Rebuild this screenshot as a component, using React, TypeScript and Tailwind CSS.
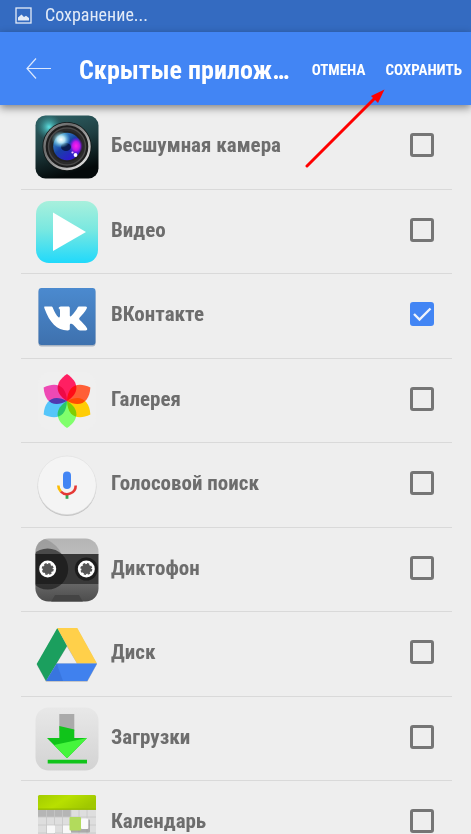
import { useState } from "react";
import type { ReactNode } from "react";

interface AppItem {
  id: string;
  name: string;
  icon: ReactNode;
}

const iconClass = "block h-16 w-16";

const CameraIcon = () => (
  <svg viewBox="0 0 64 64" className={iconClass} aria-hidden="true">
    <defs>
      <linearGradient id="camBody" x1="0" y1="0" x2="0.3" y2="1">
        <stop offset="0" stopColor="#2f6468" />
        <stop offset="0.5" stopColor="#203f42" />
        <stop offset="1" stopColor="#04090a" />
      </linearGradient>
      <radialGradient id="camGlow">
        <stop offset="0" stopColor="#5fe3e3" />
        <stop offset="1" stopColor="#2f8a8c" stopOpacity="0" />
      </radialGradient>
      <linearGradient id="camRing" x1="0" y1="0" x2="1" y2="1">
        <stop offset="0" stopColor="#8d9191" />
        <stop offset="0.3" stopColor="#6b6b6b" />
        <stop offset="0.6" stopColor="#a0a0a0" />
        <stop offset="1" stopColor="#f2f2f2" />
      </linearGradient>
      <linearGradient id="camGlass" x1="0" y1="0" x2="0.8" y2="1">
        <stop offset="0" stopColor="#4fb5d4" />
        <stop offset="0.5" stopColor="#1742a5" />
        <stop offset="1" stopColor="#3510d8" />
      </linearGradient>
      <radialGradient id="camShine">
        <stop offset="0" stopColor="#ffffff" />
        <stop offset="0.4" stopColor="#c5f0f8" stopOpacity="0.9" />
        <stop offset="1" stopColor="#4fc0e0" stopOpacity="0" />
      </radialGradient>
      <radialGradient id="camPink">
        <stop offset="0" stopColor="#ff20f0" />
        <stop offset="0.5" stopColor="#c018e8" />
        <stop offset="1" stopColor="#6018e0" stopOpacity="0" />
      </radialGradient>
    </defs>
    <rect x="0.5" y="0.5" width="63" height="63" rx="10" fill="url(#camBody)" />
    <circle cx="14" cy="12" r="13" fill="url(#camGlow)" />
    <circle cx="32" cy="31.5" r="24.5" fill="#101414" />
    <circle cx="32" cy="31.5" r="22.5" fill="#1c1c1c" stroke="url(#camRing)" strokeWidth="2.4" />
    <circle cx="32" cy="31.5" r="18.5" fill="#2b2b2b" stroke="#4a4a4a" strokeWidth="1.4" />
    <circle cx="32" cy="31.5" r="15.5" fill="#222" />
    <circle cx="32" cy="31.5" r="13.8" fill="url(#camGlass)" />
    <ellipse cx="41" cy="31" rx="7" ry="9" fill="url(#camPink)" />
    <ellipse cx="31" cy="32" rx="5" ry="4" fill="#061238" opacity="0.8" />
    <ellipse cx="26" cy="24.5" rx="9.5" ry="8.5" fill="url(#camShine)" />
    <circle cx="40.5" cy="40" r="1.9" fill="#fff" />
    <circle cx="37.5" cy="37.5" r="1.1" fill="#f3c0ff" />
  </svg>
);

const VideoIcon = () => (
  <svg viewBox="0 0 64 64" className={iconClass} aria-hidden="true">
    <defs>
      <linearGradient id="videoBg" x1="0" y1="0" x2="0" y2="1">
        <stop offset="0" stopColor="#a8f0dc" />
        <stop offset="0.45" stopColor="#7be8e0" />
        <stop offset="1" stopColor="#20d9fb" />
      </linearGradient>
    </defs>
    <rect x="1" y="1" width="62" height="62" rx="13" fill="url(#videoBg)" />
    <path d="M18 12.5V51L51 32Z" fill="#fff" />
  </svg>
);

const VkIcon = () => (
  <svg viewBox="0 0 64 64" className={iconClass} aria-hidden="true">
    <defs>
      <linearGradient id="vkBg" x1="0" y1="0" x2="0" y2="1">
        <stop offset="0" stopColor="#4b8acf" />
        <stop offset="1" stopColor="#3e71ae" />
      </linearGradient>
    </defs>
    <rect x="3.5" y="5.5" width="57" height="57" rx="3" fill="#a9b4c2" />
    <rect x="3.5" y="4" width="57" height="57" rx="3" fill="url(#vkBg)" />
    <path
      d="M10 22.6H16C17 22.6 17.5 23 18 24.2C19.5 28 21.5 31.5 23.5 33.2C24.5 34 25 33 25 31V27C25 25 24.3 24.5 23.5 24.2C24 23 25.5 22.6 27 22.6H33C34.3 22.6 34.8 23.2 34.8 24.5V31.5C34.8 32.5 35.5 32.8 36.5 31.8C39 29.2 41.5 26 42.5 23.8C43 22.8 43.5 22.6 44.5 22.6H50.5C52 22.6 52.3 23.4 51.6 24.8C49.8 28 47 31.2 44.8 33.6C44 34.5 44 35 44.8 36C47 38.3 50.5 41.5 52 44.2C52.7 45.5 52 46.4 50.6 46.4H45C43.7 46.4 43.2 46 42.3 45C40.5 43 38.5 40.6 36.5 39.8C35.3 39.4 34.8 40 34.8 41.2V44.5C34.8 46 34.2 46.4 32.5 46.4C22 46.4 14.5 38.5 9.6 24.8C9 23.2 9 22.6 10 22.6Z"
      fill="#fff"
    />
  </svg>
);

const petals = [
  { angle: 0, color: "#ff1f62" },
  { angle: 60, color: "#ff5f37" },
  { angle: 120, color: "#ffcd05" },
  { angle: 180, color: "#80ff6c" },
  { angle: 240, color: "#55c6fa" },
  { angle: 300, color: "#ee49b4" },
];

const GalleryIcon = () => (
  <svg viewBox="0 0 64 64" className={iconClass} aria-hidden="true">
    <rect x="3" y="3" width="58" height="58" rx="12" fill="#efefef" />
    <g className="isolate">
      {petals.map((petal) => (
        <path
          key={petal.angle}
          d="M32 32C19 24 20 13 32 5C44 13 45 24 32 32Z"
          fill={petal.color}
          transform={`rotate(${petal.angle} 32 32)`}
          className="mix-blend-multiply"
        />
      ))}
    </g>
  </svg>
);

const VoiceIcon = () => (
  <svg viewBox="0 0 64 64" className={iconClass} aria-hidden="true">
    <circle cx="32" cy="33.6" r="29.4" fill="#c4c4c4" />
    <circle cx="32" cy="32.3" r="29.3" fill="#f4f4f4" stroke="#dedede" strokeWidth="0.6" />
    <rect x="28" y="18.6" width="8" height="17.4" rx="4" fill="#4285f4" />
    <path d="M30.6 41H33.4V45.8H30.6Z" fill="#34a853" />
    <path d="M23.3 32.4A8.7 8.7 0 0 0 25.9 38.6" fill="none" stroke="#fbbc05" strokeWidth="2.6" />
    <path d="M25.9 38.6A8.7 8.7 0 0 0 40.7 32.4" fill="none" stroke="#e53935" strokeWidth="2.6" />
  </svg>
);

const RecorderIcon = () => (
  <svg viewBox="0 0 64 64" className={iconClass} aria-hidden="true">
    <defs>
      <clipPath id="recClip">
        <rect x="0.5" y="0.5" width="63" height="63" rx="13" />
      </clipPath>
      <linearGradient id="recTop" x1="0" y1="0" x2="0" y2="1">
        <stop offset="0" stopColor="#b4b4b4" />
        <stop offset="1" stopColor="#bdbdbd" />
      </linearGradient>
      <linearGradient id="recBottom" x1="0" y1="0" x2="0" y2="1">
        <stop offset="0" stopColor="#666" />
        <stop offset="1" stopColor="#4c4c4c" />
      </linearGradient>
    </defs>
    <g clipPath="url(#recClip)">
      <rect width="64" height="17" fill="url(#recTop)" />
      <circle cx="2" cy="27" r="27" fill="#8b8b8b" opacity="0.55" />
      <rect y="46" width="64" height="18" fill="url(#recBottom)" />
      <rect y="16" width="64" height="30" fill="#383838" />
      <circle cx="12.7" cy="31" r="20.5" fill="#111" opacity="0.6" />
      <circle cx="51.3" cy="31" r="11.5" fill="#1d1d1d" />
      <path d="M16 64L20 57H44L48 64Z" fill="#444" />
    </g>
    {[12.7, 51.3].map((cx) => (
      <g key={cx}>
        <circle cx={cx} cy="31" r="8.5" fill="#fff" />
        <circle cx={cx} cy="31" r="5" fill="#555" />
        <circle cx={cx} cy="31" r="5.2" fill="none" stroke="#555" strokeWidth="1.6" strokeDasharray="2.4 1.68" />
      </g>
    ))}
  </svg>
);

const DriveIcon = () => (
  <svg viewBox="0 0 64 64" className={iconClass} aria-hidden="true">
    <path d="M22.3 6.8L42.3 6.8L62 42.3L52.3 59.8H11L1.7 42.8Z M32 24.8L21.7 41.5H42Z" fill="#bbb" fillRule="evenodd" />
    <path d="M22.3 6L32 24L11 59L1.7 42Z" fill="#1b9f5e" />
    <path d="M22.3 6H42.3L62 41.5H42Z" fill="#ffd04a" />
    <path d="M21.7 41.5H62L52.3 59H11Z" fill="#4081ee" />
    <path d="M21.7 41.5L28 59H11Z" fill="#2c65c8" opacity="0.4" />
  </svg>
);

const DownloadsIcon = () => (
  <svg viewBox="0 0 64 64" className={iconClass} aria-hidden="true">
    <defs>
      <linearGradient id="dlBg" x1="0" y1="0" x2="0" y2="1">
        <stop offset="0" stopColor="#e8e8e8" />
        <stop offset="1" stopColor="#d3d3d3" />
      </linearGradient>
    </defs>
    <rect x="0.5" y="0.5" width="63" height="63" rx="13" fill="url(#dlBg)" />
    <path d="M24.3 7H39.3V24H24.3Z" fill="#aaa" />
    <path d="M24.3 19L39.3 22.5V31H52L32 51.3L12 31H24.3Z" fill="#10c41a" />
    <path d="M19 38L52 31L32 51.3Z" fill="#45f53c" />
    <path d="M12.7 52.7H52V56.5H12.7Z" fill="#10c41a" />
  </svg>
);

const CalendarIcon = () => (
  <svg viewBox="0 0 64 64" className={iconClass} aria-hidden="true">
    <defs>
      <linearGradient id="calTop" x1="0" y1="0" x2="1" y2="0.4">
        <stop offset="0" stopColor="#a3cc00" />
        <stop offset="0.5" stopColor="#b8e000" />
        <stop offset="1" stopColor="#a0c800" />
      </linearGradient>
    </defs>
    <rect x="3" y="4" width="58" height="58" rx="1.5" fill="#dedede" />
    <rect x="3" y="18" width="33" height="8" fill="#b5b5b5" />
    <path d="M3 26H61M3 34H61M3 42H61M3 50H61M11.5 18V62M19.5 18V62M27.5 18V62M36 18V62M44 18V62M52 18V62" stroke="#c6c6c6" strokeWidth="0.8" />
    <path d="M12 34.5H20V42H12ZM28 34.5H36V42H28Z" fill="#f8f8f8" />
    <path d="M4.5 4H59.5Q61 4 61 5.5V18.8H3V5.5Q3 4 4.5 4Z" fill="url(#calTop)" />
    <path d="M3 17.6H61V18.8H3Z" fill="#93b900" />
    <rect x="36" y="28.5" width="19" height="13" rx="1" fill="#888" opacity="0.6" />
    <rect x="46" y="27.5" width="7.3" height="10.5" rx="1" fill="#fafafa" />
    <rect x="34.5" y="26" width="11.5" height="13.5" rx="1" fill="#b2db5c" />
  </svg>
);

const apps: AppItem[] = [
  { id: "camera", name: "Бесшумная камера", icon: <CameraIcon /> },
  { id: "video", name: "Видео", icon: <VideoIcon /> },
  { id: "vk", name: "ВКонтакте", icon: <VkIcon /> },
  { id: "gallery", name: "Галерея", icon: <GalleryIcon /> },
  { id: "voice", name: "Голосовой поиск", icon: <VoiceIcon /> },
  { id: "recorder", name: "Диктофон", icon: <RecorderIcon /> },
  { id: "drive", name: "Диск", icon: <DriveIcon /> },
  { id: "downloads", name: "Загрузки", icon: <DownloadsIcon /> },
  { id: "calendar", name: "Календарь", icon: <CalendarIcon /> },
];

export default function App() {
  const [hidden, setHidden] = useState<string[]>(["vk"]);

  const toggle = (id: string) => {
    setHidden((prev) =>
      prev.includes(id) ? prev.filter((item) => item !== id) : [...prev, id]
    );
  };

  return (
    <div className="relative flex h-screen flex-col overflow-hidden bg-[#eeeeee] font-['Roboto_Condensed',Roboto,sans-serif]">
      {/* Status bar */}
      <div className="flex h-8 shrink-0 items-center gap-[13px] bg-[#346bc1] pb-0.5 pl-[15px] text-[#e3ebf7]">
        <svg viewBox="0 0 17 17" className="h-[17px] w-[17px]" aria-hidden="true">
          <rect x="1" y="1" width="15" height="15" fill="none" stroke="currentColor" strokeWidth="1.3" />
          <path d="M3 13.5V10.5L6.5 7.5L9 10L11 8.8L14 11V13.5Z" fill="currentColor" />
        </svg>
        <span className="text-[18px] leading-6">Сохранение...</span>
      </div>

      {/* Header */}
      <header className="z-10 flex h-[73px] shrink-0 items-center bg-[#4285f4] pr-[9px] pl-[26px] text-white shadow-[0_3px_8px_rgba(0,0,0,0.45)]">
        <button type="button" aria-label="Назад" className="shrink-0">
          <svg viewBox="0 0 26 22" className="h-[22px] w-[26px]" fill="none" stroke="#dce8fd" strokeWidth="1.2">
            <path d="M25 10.5H1M10 0.5L1 10.5L10 20.5" />
          </svg>
        </button>
        <h1 className="ml-[27px] flex-1 pt-0.5 text-[26px] leading-8 font-bold whitespace-nowrap">
          Скрытые прилож…
        </h1>
        <div className="ml-4 flex shrink-0 gap-5 pt-0.5 text-[15px] leading-5 font-bold">
          <button type="button">ОТМЕНА</button>
          <button type="button">СОХРАНИТЬ</button>
        </div>
      </header>

      {/* App list */}
      <ul className="min-h-0 flex-1 overflow-hidden pr-[19px] pl-[21px]">
        {apps.map((app) => (
          <li
            key={app.id}
            className="flex items-center border-b border-[#d9d9d9] pr-[18px] pl-[14px] odd:h-[85px] even:h-[84px]"
          >
            {app.icon}
            <label
              htmlFor={app.id}
              className="ml-3 flex-1 pb-1 text-[21px] leading-7 font-bold text-[#6d6d6d]"
            >
              {app.name}
            </label>
            <span className="grid pb-1">
              <input
                id={app.id}
                type="checkbox"
                checked={hidden.includes(app.id)}
                onChange={() => toggle(app.id)}
                className="peer col-start-1 row-start-1 h-6 w-6 appearance-none rounded-[3px] border-3 border-[#757575] checked:border-[#4285f4] checked:bg-[#4285f4]"
              />
              <svg
                viewBox="0 0 24 24"
                className="pointer-events-none invisible col-start-1 row-start-1 h-6 w-6 peer-checked:visible"
                fill="none"
                stroke="#eef3fb"
                strokeWidth="2.4"
              >
                <path d="M4 12L9.5 17.5L20.5 6.5" />
              </svg>
            </span>
          </li>
        ))}
      </ul>

      {/* Pointer to the save button */}
      <svg
        viewBox="0 0 80 80"
        className="pointer-events-none absolute top-[89px] right-[86px] z-20 h-20 w-20"
        aria-hidden="true"
      >
        <path d="M2 77L70 9" stroke="#ff0000" strokeWidth="3" strokeLinecap="round" />
        <path d="M79.5 0.5L66 7L73 14Z" fill="#ff0000" />
      </svg>
    </div>
  );
}
